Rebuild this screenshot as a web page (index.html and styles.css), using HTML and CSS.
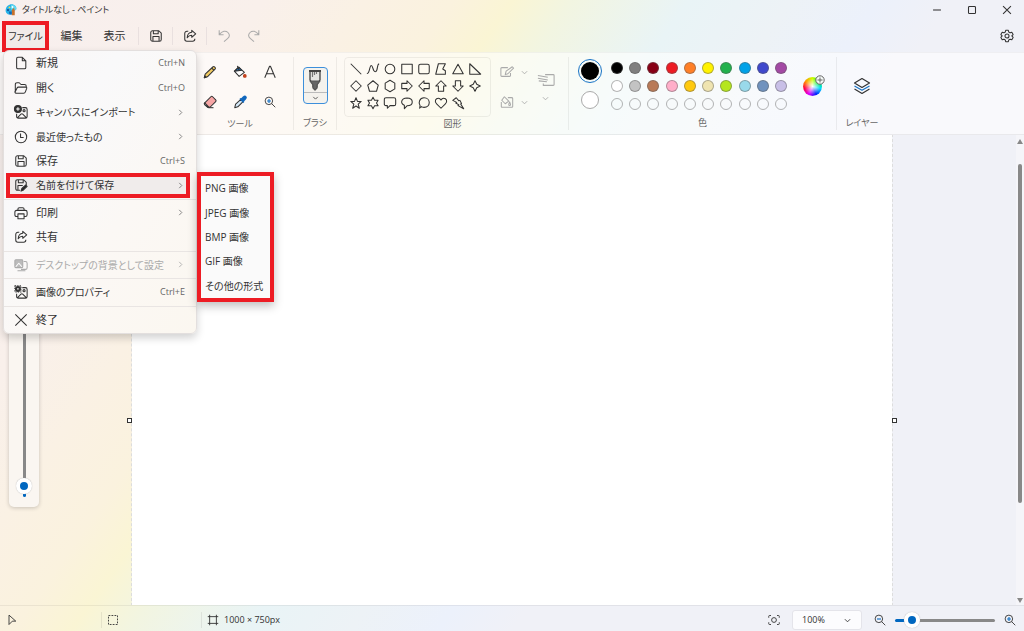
FILE: index.html
```html
<!DOCTYPE html>
<html lang="ja">
<head>
<meta charset="utf-8">
<title>タイトルなし - ペイント</title>
<link rel="stylesheet" href="styles.css">
</head>
<body>
<svg class="defs" aria-hidden="true">
  <symbol id="save" viewBox="0 0 16 16"><path d="M4 2h7.2L14 4.8V12a2 2 0 0 1-2 2H4a2 2 0 0 1-2-2V4a2 2 0 0 1 2-2zM5 2v3.5h5.5V2M4.5 14V8.5h7V14"/></symbol>
  <symbol id="share" viewBox="0 0 16 16"><path d="M6 2.500H4.500a2.500 2.500 0 0 0-2.500 2.500v6.500a2.500 2.500 0 0 0 2.500 2.500h6.500a2.500 2.500 0 0 0 2.500-2.500V11M10 1.500l4.500 4-4.500 4V7.200C7.500 7.200 6 8.200 4.800 10 5 6.500 7 4 10 3.800z"/></symbol>
  <symbol id="chev" viewBox="0 0 16 16"><path d="M5 2l6 6-6 6"/></symbol>
  <symbol id="down" viewBox="0 0 16 16"><path d="M2 5l6 6 6-6"/></symbol>
  <symbol id="mag" viewBox="0 0 16 16"><circle cx="6.500" cy="6.500" r="5"/><path d="M10.200 10.200L15 15"/></symbol>
</svg>
<div class="app">
  <header class="titlebar">
    <svg class="logo" viewBox="0 0 16 16"><path d="M6 1c5-2 10 2 9 6-.5 2-3 1-4 3s0 4-3 4C3 15 0 11 1 7c.5-3 2-5 5-6z" fill="#27b3e8"/><path d="M8 1c5-1 8 3 7 6-2 3-5-1-7 1z" fill="#62d7f0"/><circle cx="4" cy="8" r="1.500" fill="#164f97"/><circle cx="6" cy="4.500" r="1.300" fill="#f7d34a"/><circle cx="10" cy="4" r="1.200" fill="#fff"/><path d="M9 8l3-3 1 4v6H9z" fill="#c7702b"/><path d="M5 10h4v4H6z" fill="#1267b5"/></svg>
    <h1 class="title">タイトルなし - ペイント</h1>
    <div class="window-buttons">
      <button aria-label="最小化"><svg class="icon" viewBox="0 0 16 16"><path d="M3.500 8h9"/></svg></button>
      <button aria-label="最大化"><svg class="icon" viewBox="0 0 16 16"><rect x="4" y="4" width="8" height="8" rx="1"/></svg></button>
      <button aria-label="閉じる"><svg class="icon" viewBox="0 0 16 16"><path d="M3.500 3.500l9 9m0-9l-9 9"/></svg></button>
    </div>
  </header>

  <nav class="menubar">
    <button class="menu-button marked">ファイル</button>
    <button class="menu-button">編集</button>
    <button class="menu-button">表示</button>
    <div class="quick"><button aria-label="保存"><svg class="icon"><use href="#save"/></svg></button></div>
    <div class="quick"><button aria-label="共有"><svg class="icon"><use href="#share"/></svg></button></div>
    <div class="quick history">
      <button aria-label="元に戻す" disabled><svg class="icon" viewBox="0 0 16 16"><path d="M2.500 1.500v5h5M2.700 6.300C6 2 10 1.500 12.500 4s2 5-.5 7L8 14.500"/></svg></button>
      <button aria-label="やり直し" disabled><svg class="icon" viewBox="0 0 16 16"><path d="M13.500 1.500v5h-5M13.300 6.300C10 2 6 1.500 3.500 4s-2 5 .5 7L8 14.500"/></svg></button>
    </div>
    <button class="settings" aria-label="設定"><svg class="icon" viewBox="0 0 16 16"><path d="M6.500 1.500h3l.5 2 1.500.9 2-.6L15 6.400l-1.500 1.500L15 9.600l-1.500 2.600-2-.6-1.500.9-.5 2h-3l-.5-2-1.500-.9-2 .6L1 9.600l1.500-1.700L1 6.400l1.500-2.600 2 .6 1.500-.9z"/><circle cx="8" cy="8" r="2.300"/></svg></button>
  </nav>

  <section class="ribbon">
    <div class="group tools">
      <div class="tool-grid">
        <button aria-label="鉛筆"><svg class="icon" viewBox="0 0 16 16"><path d="M1.500 14.500l1-4L11.500 2c1-1 3.500 1 2.500 2.500l-9 9z" fill="#f3cc62"/><path d="M10 3.500l2.700 2.700M1.500 14.500l2-.6-1.300-1.500z"/></svg></button>
        <button aria-label="塗りつぶし"><svg class="icon" viewBox="0 0 16 16"><path d="M6.500 2.500l6.500 6-6 4.500-5.500-6z" fill="#fff"/><path d="M2 7l4.500-4.500L10 6z" fill="#1873c5"/><path d="M5 1l2 5"/><circle cx="13.500" cy="12.500" r="1.500" fill="#df4a1b" stroke="#b83b18"/></svg></button>
        <button aria-label="テキスト"><svg class="icon" viewBox="0 0 16 16"><path d="M2 14.500L7.500 1.500h1L14 14.500M4 10h8"/></svg></button>
        <button aria-label="消しゴム"><svg class="icon" viewBox="0 0 16 16"><path d="M2 9l7-7q1-1 2 0l3.500 3.500q1 1 0 2L8 14H5.500L2 11q-1-1 0-2z" fill="#f6a5a5"/><path d="M2 9l5 5H5.500L2 11q-1-1 0-2z" fill="#fff"/><path d="M6 14.500h6"/></svg></button>
        <button aria-label="色の選択"><svg class="icon" viewBox="0 0 16 16"><path d="M2 14.500l1-4L9 5l2.500 2.500-6 6z" fill="#d5e9f8"/><path d="M8 4l4.500 4.500M9.500 5L12 2.500Q13.500 1 14.500 2t-.5 2.500L11.500 7z" fill="#1268bd" stroke="#1268bd" stroke-width="2"/></svg></button>
        <button aria-label="拡大鏡"><svg class="icon mag"><use href="#mag"/><path class="blue" d="M3 5h4M5 3v4"/></svg></button>
      </div>
      <span class="caption">ツール</span>
    </div>
    <div class="group brushes">
      <button class="brush" aria-label="ブラシ">
        <svg class="brush-icon" viewBox="0 0 16 22"><path d="M3 2v9l3 4v3l2 2.500 2-2.500v-3l3-4V2z" fill="#e6e6e4"/><path d="M3 12h10l-3 4v3l-2 2-2-2v-3z" fill="#666" stroke="#555"/><path d="M2 2h12" stroke="#444" stroke-width="2"/><path d="M5.500 3v5M7.500 3v3M9.500 3v2" stroke="#777"/></svg>
        <svg class="small"><use href="#down"/></svg>
      </button>
      <span class="caption">ブラシ</span>
    </div>
    <div class="group shapes">
      <div class="shape-row">
        <div class="shape-grid">
          <button aria-label="直線"><svg class="icon" viewBox="0 0 16 16"><path d="M2 2l12 12"/></svg></button>
          <button aria-label="曲線"><svg class="icon" viewBox="0 0 16 16"><path d="M1 13C4 14 4 4 6 4s2 8 5 7 1-8 4-9"/></svg></button>
          <button aria-label="楕円"><svg class="icon" viewBox="0 0 16 16"><circle cx="8" cy="8" r="5.500"/></svg></button>
          <button aria-label="四角形"><svg class="icon" viewBox="0 0 16 16"><path d="M2 2.500h12v11H2z"/></svg></button>
          <button aria-label="角丸四角形"><svg class="icon" viewBox="0 0 16 16"><rect x="2" y="2.500" width="12" height="11" rx="2"/></svg></button>
          <button aria-label="多角形"><svg class="icon" viewBox="0 0 16 16"><path d="M5 2h8l-3 6 3 2v4H2z"/></svg></button>
          <button aria-label="三角形"><svg class="icon" viewBox="0 0 16 16"><path d="M8 2.500l6 11H2z"/></svg></button>
          <button aria-label="直角三角形"><svg class="icon" viewBox="0 0 16 16"><path d="M2 2l12.500 12H2z"/></svg></button>
          <button aria-label="ひし形"><svg class="icon" viewBox="0 0 16 16"><path d="M8 2l6 6-6 6-6-6z"/></svg></button>
          <button aria-label="五角形"><svg class="icon" viewBox="0 0 16 16"><path d="M8 2l6 5-2 7H4L2 7z"/></svg></button>
          <button aria-label="六角形"><svg class="icon" viewBox="0 0 16 16"><path d="M8 1.500l5.500 3.200v6.600L8 14.500l-5.500-3.200V4.700z"/></svg></button>
          <button aria-label="右矢印"><svg class="icon" viewBox="0 0 16 16"><path d="M2 5h6V2l6 6-6 6v-3H2z"/></svg></button>
          <button aria-label="左矢印"><svg class="icon" viewBox="0 0 16 16"><path d="M14 5H8V2L2 8l6 6v-3h6z"/></svg></button>
          <button aria-label="上矢印"><svg class="icon" viewBox="0 0 16 16"><path d="M5 14V8H2l6-6 6 6h-3v6z"/></svg></button>
          <button aria-label="下矢印"><svg class="icon" viewBox="0 0 16 16"><path d="M5 2v6H2l6 6 6-6h-3V2z"/></svg></button>
          <button aria-label="四つ星"><svg class="icon" viewBox="0 0 16 16"><path d="M8 2l2 4 4 2-4 2-2 4-2-4-4-2 4-2z"/></svg></button>
          <button aria-label="五つ星"><svg class="icon" viewBox="0 0 16 16"><path d="M8 2l1.700 4.200H14l-3.500 3 1.300 4.800L8 11.500 4.200 14l1.300-4.800L2 6.200h4.300z"/></svg></button>
          <button aria-label="六つ星"><svg class="icon" viewBox="0 0 16 16"><path d="M8 1.500l1.800 3.300h4L12 8l1.800 3.200h-4L8 14.500l-1.800-3.300h-4L4 8 2.200 4.800h4z"/></svg></button>
          <button aria-label="角丸吹き出し"><svg class="icon" viewBox="0 0 16 16"><path d="M3.500 2h9q2 0 2 2v5q0 2-2 2H8l-3 3v-3H3.500q-2 0-2-2V4q0-2 2-2z"/></svg></button>
          <button aria-label="楕円吹き出し"><svg class="icon" viewBox="0 0 16 16"><path d="M5 14.500v-4C.5 9 .5 2.500 8 2.200c8 .3 8 8.800 0 9z"/></svg></button>
          <button aria-label="雲形吹き出し"><svg class="icon" viewBox="0 0 16 16"><path d="M3 14l.5-3C1 8 3 2 8 2c8 0 8 11 0 11q-2 0-3-1z"/></svg></button>
          <button aria-label="ハート"><svg class="icon" viewBox="0 0 16 16"><path d="M8 14L3 9C0 6 2 2.500 5 2.500q2 0 3 2.200 1-2.200 3-2.200c3 0 5 3.500 2 6.500z"/></svg></button>
          <button aria-label="稲妻"><svg class="icon" viewBox="0 0 16 16"><path d="M6 2l3 3.500 1.200-.5L12 8.500l-1 .5 3.500 5.500L8 11l1-.8L5.500 8l1-.7L2 5z"/></svg></button>
        </div>
        <div class="shape-options">
          <button aria-label="輪郭" disabled><svg class="icon" viewBox="0 0 16 16"><path d="M9 3H2q-1 0-1 1v8q0 1 1 1h9q1 0 1-1V9M6 11l1-4 7-5 1.500 1.500L9 10z"/></svg><svg class="small"><use href="#down"/></svg></button>
          <button aria-label="塗りつぶしの種類" disabled><svg class="icon" viewBox="0 0 16 16"><path d="M9 3h4q1.500 0 1.500 1v9q0 1-1 1h-11q-1 0-1-1V8M5 2L2 6l4 4 4-3zM11 8q-2 4 0 4t0-4z"/></svg><svg class="small"><use href="#down"/></svg></button>
        </div>
        <button class="stroke-size" aria-label="サイズ" disabled><svg class="wide" viewBox="0 0 20 16"><path d="M9 2h9q1 0 1 1v10q0 1-1 1H7v-2M1 3l11 2M1 6l11 2M2 9l9 1"/></svg><svg class="small"><use href="#down"/></svg></button>
      </div>
      <span class="caption">図形</span>
    </div>
    <div class="group colors">
      <div class="color-row">
        <div class="current">
          <button class="primary" aria-label="色 1"></button>
          <button class="secondary" aria-label="色 2"></button>
        </div>
        <div class="palette">
          <button class="black" aria-label="黒"></button><button class="gray" aria-label="灰色"></button><button class="darkred" aria-label="濃い赤"></button><button class="red" aria-label="赤"></button><button class="orange" aria-label="オレンジ"></button><button class="yellow" aria-label="黄"></button><button class="green" aria-label="緑"></button><button class="sky" aria-label="青緑"></button><button class="indigo" aria-label="青"></button><button class="purple" aria-label="紫"></button>
          <button class="white" aria-label="白"></button><button class="silver" aria-label="薄い灰色"></button><button class="brown" aria-label="茶"></button><button class="pink" aria-label="ピンク"></button><button class="gold" aria-label="金"></button><button class="cream" aria-label="薄い黄"></button><button class="lime" aria-label="黄緑"></button><button class="aqua" aria-label="水色"></button><button class="steel" aria-label="青灰色"></button><button class="lavender" aria-label="ラベンダー"></button>
          <button aria-label="空き 1"></button><button aria-label="空き 2"></button><button aria-label="空き 3"></button><button aria-label="空き 4"></button><button aria-label="空き 5"></button><button aria-label="空き 6"></button><button aria-label="空き 7"></button><button aria-label="空き 8"></button><button aria-label="空き 9"></button><button aria-label="空き 10"></button>
        </div>
        <button class="wheel" aria-label="色の編集"><svg class="wheel-plus" viewBox="0 0 10 10"><circle cx="5" cy="5" r="4.200" fill="#f5faf8"/><path d="M5 2.500v5M2.500 5h5"/></svg></button>
      </div>
      <span class="caption">色</span>
    </div>
    <div class="group layers">
      <button aria-label="レイヤー"><svg class="wide" viewBox="0 0 18 18"><path d="M9 1.500L16.500 6 9 10.500 1.500 6z"/><path class="blue" d="M1.500 9L9 13.200 16.500 9"/><path d="M1.500 12L9 16.500l7.500-4.500"/></svg></button>
      <span class="caption">レイヤー</span>
    </div>
  </section>

  <main class="workspace">
    <div class="canvas"><span class="handle handle-left"></span><span class="handle handle-right"></span></div>
    <div class="zoom-panel"><input class="brush-size" type="range" min="0" max="100" value="1" aria-label="ブラシのサイズ"></div>
    <div class="scrollbar"><span class="arrow arrow-up"></span><span class="scroll-thumb"></span><span class="arrow arrow-down"></span></div>
  </main>

  <footer class="statusbar">
    <div class="status-cell"><svg class="icon" viewBox="0 0 16 16"><path d="M4 1.500l9 8H8.500L4 14z"/></svg></div>
    <div class="status-cell"><svg class="icon" viewBox="0 0 16 16"><path stroke-dasharray="2.400 1.600" d="M2 2h12v12H2z"/></svg></div>
    <div class="status-cell"><svg class="icon" viewBox="0 0 16 16"><path d="M3.500 1v14M12.500 1v14M1 3.500h14M1 12.500h14"/></svg><span>1000 × 750px</span></div>
    <div class="zoom-controls">
      <button aria-label="画面に合わせる"><svg class="icon" viewBox="0 0 16 16"><circle cx="8" cy="8" r="3.200"/><path d="M1 5V3q0-1 1-1h2M12 2h2q1 0 1 1v2M15 11v2q0 1-1 1h-2M4 14H2q-1 0-1-1v-2"/></svg></button>
      <div class="select-wrap"><select aria-label="ズーム"><option>100%</option></select><svg class="small"><use href="#down"/></svg></div>
      <button aria-label="縮小"><svg class="icon mag"><use href="#mag"/><path class="blue" d="M3 5h4"/></svg></button>
      <input class="zoom-range" type="range" min="0" max="100" value="11" aria-label="ズーム率">
      <button aria-label="拡大"><svg class="icon mag"><use href="#mag"/><path class="blue" d="M3 5h4M5 3v4"/></svg></button>
    </div>
  </footer>

  <div class="file-menu" role="menu">
    <button role="menuitem"><svg class="icon" viewBox="0 0 16 16"><path d="M4.500 1.500h5l4 4V13q0 1.500-1.500 1.500H4.500Q3 14.500 3 13V3q0-1.500 1.500-1.500zM9.500 1.500v4h4"/></svg><span class="label">新規</span><kbd>Ctrl+N</kbd></button>
    <button role="menuitem"><svg class="icon" viewBox="0 0 16 16"><path d="M1.500 12V4q0-2 2-2h2.500l2 2h4q2 0 2 2v1M1.500 12l2-4Q4 7 5 7h8.500q1.500 0 1 1.500l-1.500 4q-.5 1.500-2 1.500h-8q-2 0-2-2z"/></svg><span class="label">開く</span><kbd>Ctrl+O</kbd></button>
    <button role="menuitem"><svg class="icon" viewBox="0 0 16 16"><path d="M9.500 3H13q2 0 2 2v8q0 2-2 2H5q-2 0-2-2V10M4 14.500l4-4q1-1 2 0l4 4"/><circle cx="11.500" cy="6.500" r="1.200"/><circle cx="4.500" cy="4.500" r="4" fill="#333"/><path d="M4.500 2.500v4m-2-2h4" stroke="#fff"/></svg><span class="label kana">キャンバスにインポート</span><svg class="small"><use href="#chev"/></svg></button>
    <button role="menuitem"><svg class="icon" viewBox="0 0 16 16"><circle cx="8" cy="8" r="6.500"/><path d="M7.500 4v4.500H11"/></svg><span class="label kana">最近使ったもの</span><svg class="small"><use href="#chev"/></svg></button>
    <button role="menuitem"><svg class="icon"><use href="#save"/></svg><span class="label">保存</span><kbd>Ctrl+S</kbd></button>
    <button role="menuitem" class="current-item"><svg class="icon" viewBox="0 0 16 16"><path d="M7 14H4q-2 0-2-2V4q0-2 2-2h7l3 3v3M5 2v3.500h5.500V2M4.500 14V8.500H10"/><path d="M8 15l1-3 4.500-4L15 9.500 10.500 14z" fill="#222"/></svg><span class="label kana">名前を付けて保存</span><svg class="small"><use href="#chev"/></svg></button>
    <hr>
    <button role="menuitem"><svg class="icon" viewBox="0 0 16 16"><path d="M4.500 5V3.500q0-1.500 1.500-1.500h4q1.500 0 1.500 1.500V5M4.500 12H3q-2 0-2-2V7q0-2 2-2h10q2 0 2 2v3q0 2-2 2h-1.500M4.500 9h7v5.500h-7z"/></svg><span class="label">印刷</span><svg class="small"><use href="#chev"/></svg></button>
    <button role="menuitem"><svg class="icon"><use href="#share"/></svg><span class="label">共有</span></button>
    <hr>
    <button role="menuitem" disabled><svg class="icon" viewBox="0 0 16 16"><path d="M11 4h2q2 0 2 2v5q0 2-2 2H8M4 14.500h9"/><rect x="1" y="2" width="9" height="9" rx="1" fill="#bbb"/><path d="M2 10l3.500-4L9 10" stroke="#fff"/></svg><span class="label kana">デスクトップの背景として設定</span><svg class="small"><use href="#chev"/></svg></button>
    <hr>
    <button role="menuitem"><svg class="icon" viewBox="0 0 16 16"><path d="M9.500 3H13q2 0 2 2v8q0 2-2 2H5q-2 0-2-2V10M4 14.500l4-4q1-1 2 0l4 4"/><circle cx="11.500" cy="6.500" r="1.200"/><circle cx="4.500" cy="4.500" r="2.200" stroke-width="2.500"/><path stroke-dasharray="1.500 1.200" d="M1 1h7v7H1z"/></svg><span class="label kana">画像のプロパティ</span><kbd>Ctrl+E</kbd></button>
    <hr>
    <button role="menuitem"><svg class="icon" viewBox="0 0 16 16"><path d="M1.500 1.500l13 13m0-13l-13 13"/></svg><span class="label">終了</span></button>
  </div>
  <div class="submenu" role="menu">
    <button role="menuitem">PNG 画像</button>
    <button role="menuitem">JPEG 画像</button>
    <button role="menuitem">BMP 画像</button>
    <button role="menuitem">GIF 画像</button>
    <button role="menuitem">その他の形式</button>
  </div>
</div>
</body>
</html>
```
FILE: styles.css
```css
* { box-sizing: border-box; }
body {
  margin: 0;
  font: 11px/16px "Open Sans", "Noto Sans CJK JP", sans-serif;
  font-feature-settings: "palt";
  color: #333;
}
button, select {
  font: inherit;
  font-feature-settings: inherit;
  color: inherit;
  background: none;
  border: 0;
  padding: 0;
}
button { display: flex; align-items: center; justify-content: center; }
svg { flex: none; fill: none; stroke: currentColor; stroke-width: 1.2; stroke-linejoin: round; display: block; overflow: visible; }
.defs { position: absolute; width: 0; height: 0; }
.icon { width: 14px; height: 14px; }
.mag { width: 12px; height: 12px; }
.small { width: 7px; height: 7px; stroke-width: 2; }
.wide { width: 18px; height: 18px; }
.blue { stroke: #1873c5; }
button:disabled { color: #aaa; }

.app {
  position: relative;
  display: flex;
  flex-direction: column;
  height: 100vh;
  overflow: hidden;
  background: linear-gradient(125deg, #f7efee 0%, #f9f0eb 18%, #faf1e4 25%, #faf2de 31%, #faf5d4 35%, #f2f5e1 39%, #e9f4f6 47%, #edf2f6 54%, #ecf1fb 60%, #f0f1f7 65%, #f0f1f7 100%);
}

.titlebar { display: flex; align-items: center; height: 19px; padding-left: 5px; gap: 5px; }
.logo { width: 12px; height: 12px; stroke: none; }
.title { flex: 1; margin: 0; font-size: 9px; font-weight: 400; line-height: 16px; }
.window-buttons { display: flex; }
.window-buttons button { width: 35px; height: 19px; }

.menubar { display: flex; align-items: center; height: 33px; padding: 1px 0 0 2px; }
.menu-button { width: 43px; height: 31px; }
.marked { width: 47px; margin-right: 1px; border: 4px solid #ed1c24; background: #f1ebe9; font-size: 10px; }
.quick { display: flex; justify-content: center; width: 34px; border-left: 1px solid #e9e0df; height: 18px; }
.quick:first-of-type { margin-left: 2px; }
.history { width: 64px; gap: 16px; }
.settings { margin-left: auto; width: 35px; height: 31px; }

.ribbon {
  display: flex;
  height: 83px;
  padding: 4px 0 4px 187px;
  background: rgba(255, 255, 255, .6);
  border-top: 1px solid rgba(0, 0, 0, .04);
  border-bottom: 1px solid rgba(0, 0, 0, .06);
}
.group { display: flex; flex-direction: column; align-items: center; justify-content: space-between; border-right: 1px solid rgba(0, 0, 0, .06); }
.group:last-child { border: 0; }
.caption { font-size: 9px; line-height: 14px; color: #666; }
.tools { width: 107px; }
.tool-grid { display: grid; grid-template-columns: repeat(3, 30px); grid-template-rows: 30px 30px; }
.brushes { width: 43px; }
.brush { flex-direction: column; width: 25px; height: 37px; margin-top: 10px; border: 1px solid #3c8fdb; border-radius: 4px; background: #f4f2ed; }
.brush-icon { width: 16px; height: 22px; margin: 1px 0; }
.brush .small { width: 23px; height: 11px; padding: 2px 0; border-top: 1px solid #bbb; stroke-width: 2; }
.shapes { width: 232px; }
.shape-row { display: flex; width: 218px; gap: 9px; }
.shape-grid { display: grid; grid-template-columns: repeat(8, 17px); grid-template-rows: repeat(3, 17px); padding: 2px 6px 4px 3px; border: 1px solid rgba(0, 0, 0, .06); border-radius: 4px; }
.shape-options { display: grid; grid-template-rows: 30px 30px; }
.shape-options button { gap: 7px; }
.stroke-size { flex-direction: column; justify-content: flex-start; gap: 6px; padding-top: 14px; }

.colors { width: 268px; }
.color-row { display: flex; align-items: flex-start; gap: 6px; width: 250px; padding-top: 2px; }
.current { display: flex; flex-direction: column; align-items: center; gap: 8px; }
.current button { border-radius: 50%; }
.primary { width: 24px; height: 24px; padding: 2px; border: 1px solid #1873c5; background: #000 content-box; }
.secondary { width: 18px; height: 18px; border: 1px solid #aaa; background: #fff; }
.palette { flex: none; width: 183px; display: grid; grid-template-columns: repeat(10, 1fr); grid-template-rows: repeat(3, 18px); justify-items: center; align-items: center; }
.palette button { width: 12px; height: 12px; border: 1px solid rgba(90, 90, 90, .45); border-radius: 50%; }
.palette .black { background: #000; }
.palette .gray { background: #7f7f7f; }
.palette .darkred { background: #880015; }
.palette .red { background: #ed1c24; }
.palette .orange { background: #ff7f27; }
.palette .yellow { background: #fff200; }
.palette .green { background: #22b14c; }
.palette .sky { background: #00a2e8; }
.palette .indigo { background: #3f48cc; }
.palette .purple { background: #a349a4; }
.palette .white { background: #fff; }
.palette .silver { background: #c3c3c3; }
.palette .brown { background: #b97a57; }
.palette .pink { background: #ffaec9; }
.palette .gold { background: #ffc90e; }
.palette .cream { background: #efe4b0; }
.palette .lime { background: #b5e61d; }
.palette .aqua { background: #99d9ea; }
.palette .steel { background: #7092be; }
.palette .lavender { background: #c8bfe7; }
.wheel { position: relative; width: 19px; height: 19px; margin: 18px 0 0 6px; border-radius: 50%; background: radial-gradient(circle, #fff 0%, transparent 60%), conic-gradient(#cf0, #0e3, #0df, #02f, #d0f, #f04, #f90, #cf0); }
.wheel-plus { position: absolute; top: -2px; right: -3px; width: 10px; height: 10px; stroke-width: 1; color: #666; }
.layers { width: 50px; }
.layers button { width: 30px; height: 30px; margin-top: 14px; }

.workspace { position: relative; flex: 1; display: flex; min-height: 0; padding: 0 132px; }
.canvas { position: relative; flex: 1; background: #fff; outline: 1px dashed #ddd; clip-path: inset(0 -6px); }
.handle { position: absolute; top: 283px; width: 5px; height: 5px; border: 1px solid #333; background: #fff; }
.handle-left { left: -5px; }
.handle-right { right: -5px; }
.zoom-panel { position: absolute; left: 9px; top: 30px; display: flex; justify-content: center; width: 30px; height: 342px; padding: 10px 0; border-radius: 5px; background: #faf6f1; box-shadow: 0 1px 4px rgba(0, 0, 0, .2); }
input[type="range"] { appearance: none; margin: 0; background: none; }
.brush-size { writing-mode: vertical-lr; direction: rtl; width: 16px; height: 100%; }
.brush-size::-webkit-slider-runnable-track { width: 3px; height: 100%; border-radius: 2px; background: linear-gradient(#888 97%, #0067c0 97%); }
.brush-size::-webkit-slider-thumb { appearance: none; width: 16px; height: 16px; margin-left: -7px; border: 4px solid #fff; border-radius: 50%; background: #0067c0; box-shadow: 0 0 1px #aaa; }
.scrollbar { position: absolute; top: 0; right: 0; bottom: 0; display: flex; flex-direction: column; align-items: center; width: 8px; padding: 4px 0 2px; background: #f5f5f9; }
.arrow { border: 3px solid transparent; }
.arrow-up { border-top: 0; border-bottom: 5px solid #888; }
.arrow-down { border-bottom: 0; border-top: 5px solid #888; margin-top: auto; }
.scroll-thumb { width: 4px; height: 73%; margin-top: 20px; border-radius: 2px; background: #888; }

.statusbar { display: flex; align-items: center; height: 26px; padding: 3px 8px 0 6px; border-top: 1px solid rgba(0, 0, 0, .06); font-size: 9px; }
.status-cell { display: flex; align-items: center; gap: 5px; width: 95px; height: 16px; }
.status-cell .icon { width: 12px; height: 12px; }
.status-cell + .status-cell { width: 100px; padding-left: 5px; border-left: 1px solid rgba(0, 0, 0, .07); }
.zoom-controls { display: flex; align-items: center; gap: 9px; margin-left: auto; }
.zoom-controls .icon { width: 12px; height: 12px; }
.select-wrap { position: relative; width: 70px; height: 20px; margin: 0 3px; }
.select-wrap select { appearance: none; width: 100%; height: 100%; padding: 0 9px; border: 1px solid #e4e4ea; border-radius: 3px; background: #fcfcfe; }
.select-wrap .small { position: absolute; right: 11px; top: 7px; pointer-events: none; }
.zoom-range { width: 100px; height: 16px; }
.zoom-range::-webkit-slider-runnable-track { height: 3px; border-radius: 2px; background: linear-gradient(90deg, #0067c0 15%, #888 15%); }
.zoom-range::-webkit-slider-thumb { appearance: none; width: 16px; height: 16px; margin-top: -7px; border: 4px solid #fff; border-radius: 50%; background: #0067c0; box-shadow: 0 0 1px #aaa; }

.file-menu {
  position: absolute;
  left: 3px;
  top: 50px;
  display: flex;
  flex-direction: column;
  width: 194px;
  height: 284px;
  padding: 0 3px 1px;
  border: 1px solid #e3dfde;
  border-radius: 6px;
  background: linear-gradient(125deg, #faf6f5, #f9f9fa 30%, #fbf8f5 60%, #fbf7f0);
  box-shadow: 0 4px 8px rgba(0, 0, 0, .18);
}
.file-menu button { flex: 1; justify-content: flex-start; gap: 8px; padding: 0 8px 0 7px; text-align: left; }
.file-menu .label { flex: 1; white-space: nowrap; }
.file-menu .kana { font-size: 10px; }
.file-menu kbd { font: 9px/16px "Open Sans", sans-serif; color: #666; }
.file-menu button > .small { margin-right: 1px; color: #777; }
.file-menu button:disabled > .small { color: #aaa; }
.file-menu hr { width: calc(100% + 6px); height: 1px; margin: 1px -3px; border: 0; background: #e9e5e3; flex: none; }
.file-menu .current-item { margin: 0 3px 0 -1px; padding: 0 5px 0 8px; outline: 4px solid #ed1c24; outline-offset: -4px; background: #f0eceb; }
.submenu { position: absolute; left: 197px; top: 172px; display: flex; flex-direction: column; width: 77px; height: 130px; border: 4px solid #ed1c24; background: #fafafa; box-shadow: 0 4px 9px rgba(0, 0, 0, .25); }
.submenu button { flex: 1; justify-content: flex-start; padding-left: 4px; white-space: nowrap; font-size: 10px; }
```
